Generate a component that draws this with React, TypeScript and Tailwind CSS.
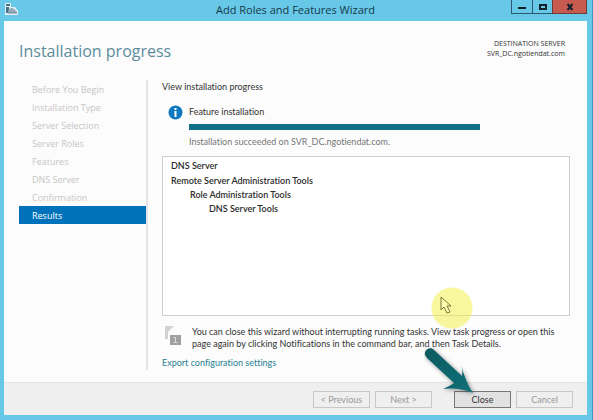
import React from "react";

const steps = [
  "Before You Begin",
  "Installation Type",
  "Server Selection",
  "Server Roles",
  "Features",
  "DNS Server",
  "Confirmation",
  "Results",
];

function ServerIcon() {
  return (
    <svg width="13" height="12" viewBox="0 0 13 12" aria-hidden="true">
      <path d="M0 0h6v4h4l3 4v4H0z" fill="#e3f1f7" />
      <path d="M1 1h4v2H1zM1 4h3v6H1z" fill="#42718a" />
      <path d="M3 9c0-3 2-4 4-4s2 1 3 2 2 1 2 3H3z" fill="#94a9b6" />
      <path d="M3 10h9" stroke="#6d8798" />
    </svg>
  );
}

function TitleBar() {
  return (
    <header className="grid h-[21px] grid-cols-[1fr_auto_1fr] items-start">
      <div className="pt-[3px] pl-px">
        <ServerIcon />
      </div>
      <h1 className="font-['Open_Sans','Noto_Sans',sans-serif] text-[11px] leading-[19px] text-[#17394a]">
        Add Roles and Features Wizard
      </h1>
      <div className="flex h-[14px] justify-end text-[#10222c]">
        <button aria-label="Minimize" className="flex w-[22px] items-center justify-center border border-t-0 border-[#2c5a70]">
          <svg width="8" height="8" viewBox="0 0 8 8"><path d="M0 4h8v2H0z" fill="currentColor" /></svg>
        </button>
        <button aria-label="Maximize" className="flex w-[19px] items-center justify-center border-b border-[#2c5a70]">
          <svg width="8" height="8" viewBox="0 0 8 8"><path d="M1 2h6v4H1z" fill="none" stroke="currentColor" strokeWidth="2" /></svg>
        </button>
        <button aria-label="Close window" className="flex w-[35px] items-center justify-center border border-t-0 border-[#6e3a3a] bg-[#c75b4f]">
          <svg width="8" height="8" viewBox="0 0 8 8"><path d="M1.500 1l5 6M6.500 1l-5 6" stroke="currentColor" strokeWidth="2" /></svg>
        </button>
      </div>
    </header>
  );
}

function Steps() {
  return (
    <nav className="w-[129px] shrink-0 border-r-2 border-[#e4e4e4] font-['Open_Sans','Noto_Sans',sans-serif]">
      <ol>
        {steps.map((step) =>
          step === "Results" ? (
            <li key={step} aria-current="step" className="h-[18px] bg-[#0072bc] pl-[13px] leading-[19px] text-white">
              {step}
            </li>
          ) : (
            <li key={step} className="h-[18px] pl-[13px] leading-[19px] text-[#c6c6c6]">
              {step}
            </li>
          ),
        )}
      </ol>
    </nav>
  );
}

function NotificationIcon() {
  return (
    <svg width="18" height="20" viewBox="0 0 18 20" className="shrink-0" aria-hidden="true">
      <path d="M0 0h9L3 6v7H0z" fill="#d2d2d2" />
      <path d="M5 9h11v10H5z" fill="#a0a0a0" />
      <path d="M8.500 11.500h2v5M8.500 16.500h4" stroke="#dcdcdc" fill="none" />
    </svg>
  );
}

function Results() {
  return (
    <main className="min-w-0 flex-1 pl-[14px] text-[#333]">
      <p className="leading-[14px]">View installation progress</p>
      <div className="mt-[11px] flex gap-[6px] pl-[6px]">
        <svg width="15" height="15" viewBox="0 0 15 15" className="shrink-0" aria-hidden="true">
          <circle cx="7.500" cy="7.500" r="7" fill="#0f78bf" />
          <path d="M6.500 3h2v2h-2zM6.500 6h2v6h-2z" fill="#fff" />
        </svg>
        <div className="flex-1 pr-[90px]">
          <p className="leading-[14px]">Feature installation</p>
          <div
            role="progressbar"
            aria-label="Feature installation"
            aria-valuenow={100}
            className="mt-[5px] h-[6px] bg-[#117088]"
          />
          <p className="mt-[5px] leading-[14px] text-[#777]">Installation succeeded on SVR_DC.ngotiendat.com.</p>
        </div>
      </div>
      <div className="mt-[7px] h-[160px] border border-[#cfcfcf] bg-white px-2 pt-[2px] font-semibold text-[#2b2b2b]">
        <p className="leading-[14px]">DNS Server</p>
        <ul className="mt-[1px] leading-[14px]">
          <li>Remote Server Administration Tools
            <ul className="pl-[19px]">
              <li>Role Administration Tools
                <ul className="pl-[19px]">
                  <li>DNS Server Tools</li>
                </ul>
              </li>
            </ul>
          </li>
        </ul>
      </div>
      <div className="mt-[10px] flex gap-[9px] pl-[3px]">
        <NotificationIcon />
        <p className="leading-[12px]">
          You can close this wizard without interrupting running tasks. View task progress or open this
          page again by clicking Notifications in the command bar, and then Task Details.
        </p>
      </div>
      <a href="#export" className="mt-[6px] block w-fit leading-[14px] text-[#2a7f93]">Export configuration settings</a>
    </main>
  );
}

function Pointer() {
  return (
    <svg width="76" height="112" viewBox="0 0 76 112" className="pointer-events-none absolute right-[92px] bottom-6" aria-hidden="true">
      <defs>
        <linearGradient id="arrow" x1="0" y1="0" x2="1" y2="1">
          <stop offset="0" stopColor="#0f5a60" />
          <stop offset="1" stopColor="#127078" />
        </linearGradient>
        <filter id="shade" x="-20%" y="-20%" width="150%" height="150%">
          <feDropShadow dx="1" dy="1" stdDeviation="2" floodOpacity="0.45" />
        </filter>
      </defs>
      <circle cx="28" cy="24" r="20.500" fill="#f3f04e" fillOpacity="0.55" />
      <path d="M17 13v13l3-3 3 6 3-1-3-6h4z" fill="#ffffb0" stroke="#77763c" strokeWidth="1" />
      <path
        d="M1 71C0 66 6 62 10 66L38 92Q39 87 37 80Q41 97 49 109Q35 103 19 105Q26 102 30 99L3 74z"
        fill="url(#arrow)"
        filter="url(#shade)"
      />
    </svg>
  );
}

export default function App() {
  const button = "h-[17px] w-[57px] border leading-[15px]";
  return (
    <div className="relative flex min-h-screen flex-col border-r border-[#3d96bd] bg-[#67c8e8] pr-[5px] pb-[5px] pl-1 font-[Lato,'Open_Sans',sans-serif] text-[9px] [font-variant-ligatures:none]">
      <TitleBar />
      <div className="flex flex-1 flex-col bg-[#fcfcfc]">
        <div className="flex items-start justify-between pt-[17px] pr-[22px] pl-[15px] font-['Open_Sans','Noto_Sans',sans-serif]">
          <h2 className="text-[16px] leading-[26px] text-[#5c8c9c]">Installation progress</h2>
          <p className="pt-[1px] text-right text-[7px] leading-[10px] text-[#333]">
            DESTINATION SERVER
            <br />
            SVR_DC.ngotiendat.com
          </p>
        </div>
        <div className="mt-4 flex flex-1 pr-[17px] pb-3 pl-[15px]">
          <Steps />
          <Results />
        </div>
        <footer className="flex justify-end border-t border-[#e3e3e3] bg-[#efefef] px-[14px] pt-2 pb-[7px] text-[#999]">
          <button disabled className={`${button} border-[#c8c8c8]`}>&lt; Previous</button>
          <button disabled className={`${button} ml-[5px] border-[#c8c8c8]`}>Next &gt;</button>
          <button className={`${button} ml-[22px] border-[#777] bg-[#e2e2e2] text-[#333]`}>Close</button>
          <button disabled className={`${button} ml-[5px] border-[#c8c8c8]`}>Cancel</button>
        </footer>
      </div>
      <Pointer />
    </div>
  );
}
